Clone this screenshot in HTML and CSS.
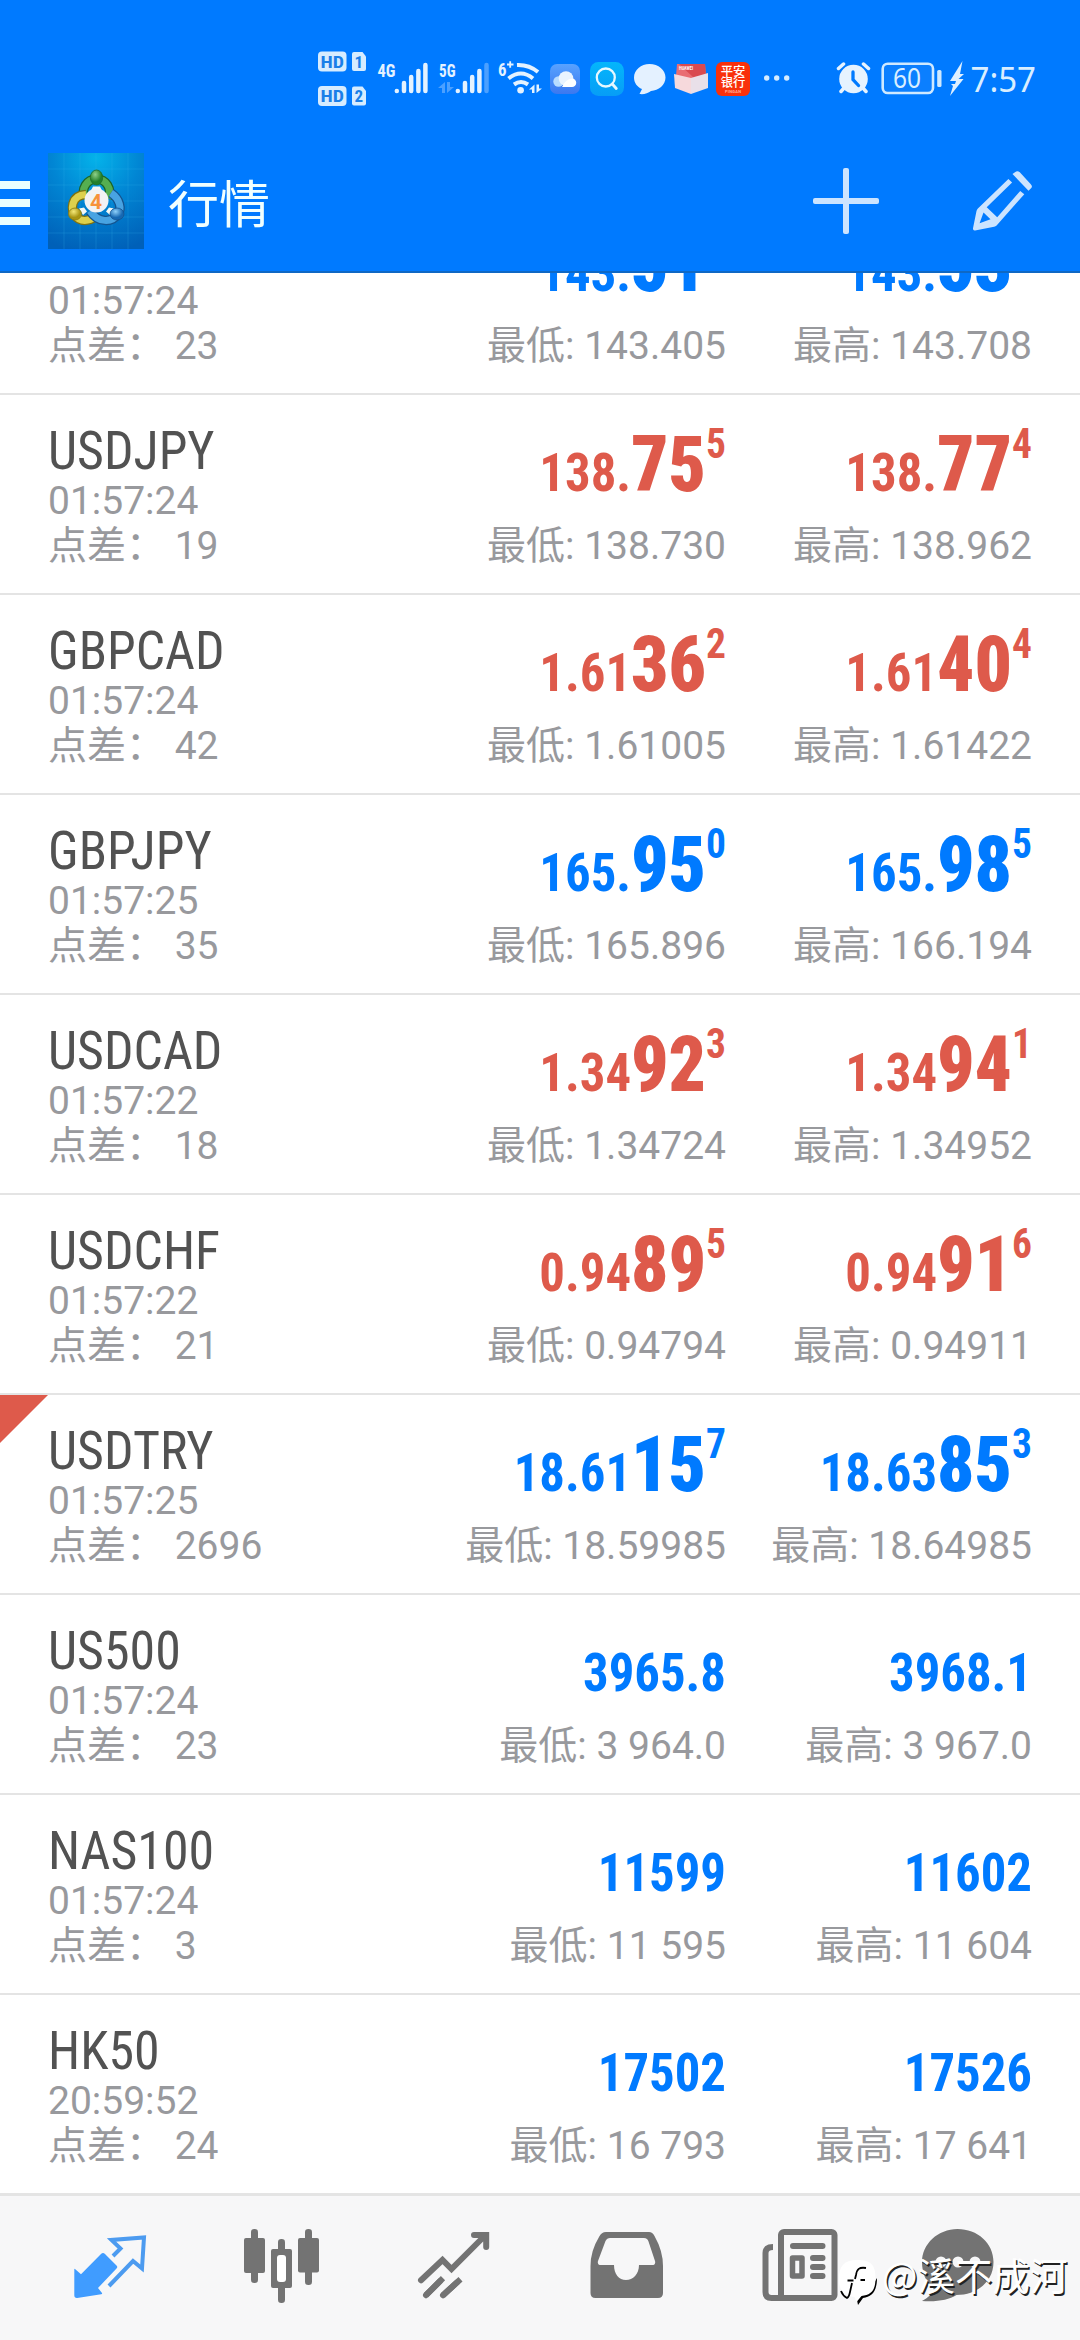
FILE: index.html
```html
<!DOCTYPE html>
<html lang="zh-CN">
<head>
<meta charset="utf-8">
<title>行情</title>
<link rel="stylesheet" href="styles.css">
</head>
<body>
<div class="screen">
  <header class="top">
    <div class="status">
      <svg class="st-hd" viewBox="316 48 54 62" width="54" height="62">
        <g fill="#d6ecff">
          <rect x="318" y="51.5" width="28.5" height="20" rx="4"/>
          <path d="M354 52h8.500l3.500 4.500v12.500a2 2 0 0 1-2 2h-10a2 2 0 0 1-2-2v-15a2 2 0 0 1 2-2z"/>
          <rect x="318" y="86" width="28.500" height="20" rx="4"/>
          <path d="M354 86.500h8.500l3.500 4.500v12.500a2 2 0 0 1-2 2h-10a2 2 0 0 1-2-2v-15a2 2 0 0 1 2-2z"/>
        </g>
        <g class="cut">
          <text x="320.500" y="67.600" textLength="23.500" lengthAdjust="spacingAndGlyphs">HD</text><text x="354.500" y="67.600">1</text>
          <text x="320.500" y="102.100" textLength="23.500" lengthAdjust="spacingAndGlyphs">HD</text><text x="354.500" y="102.100">2</text>
        </g>
      </svg>
      <svg class="st-4g" viewBox="376 58 54 38" width="54" height="38">
        <text class="net" x="377.500" y="76.500" textLength="18" lengthAdjust="spacingAndGlyphs">4G</text>
        <path class="bars" d="M396.800 91v0M404 83v8M411.200 77v14M418.400 71v20M425.400 65v26"/>
      </svg>
      <svg class="st-5g" viewBox="437 58 54 38" width="54" height="38">
        <text class="net" x="439" y="76.500" textLength="16.500" lengthAdjust="spacingAndGlyphs">5G</text>
        <path class="bars" d="M457.800 91v0M465 83v8M472.200 77v14M479.400 71v20"/>
        <path class="bars dim" d="M486.500 65v26"/>
        <path fill="#4ba0ff" d="M445 82v11h-3v-5h-4zM447 82v11l7-6h-4v-5z"/>
      </svg>
      <svg class="st-wifi" viewBox="497 58 48 38" width="48" height="38">
        <text class="net" x="498" y="75.500" textLength="8.500" lengthAdjust="spacingAndGlyphs">6</text>
        <path d="M507 64.500h6.500M510.200 61.200v6.500" stroke="#e4f2ff" stroke-width="1.800"/>
        <g fill="none" stroke="#e4f2ff" stroke-width="4">
          <path d="M517 65q12-.5 21 7"/>
          <path d="M508.500 78.500q12.500-10 24.500 0"/>
          <path d="M514 84.500q7-5 14 0"/>
        </g>
        <circle cx="520.600" cy="90.200" r="3.300" fill="#e4f2ff"/>
        <path fill="#e4f2ff" d="M534.500 84.500v8.500h-2.500v-3.500h-3zM536.500 84.500v8.500l5.500-4.500h-3v-4z"/>
      </svg>
      <svg class="st-cloud" viewBox="550 64 30 30" width="30" height="30">
        <defs><linearGradient id="cl" x2="0" y2="1"><stop stop-color="#58a2ff"/><stop offset="1" stop-color="#3b78f0"/></linearGradient></defs>
        <rect x="550" y="64" width="30" height="30" rx="7" fill="url(#cl)"/>
        <circle cx="558.500" cy="81.500" r="5.200" fill="#b9dcff"/><circle cx="566" cy="78.500" r="7.300" fill="#eaf4ff"/>
        <path fill="#fff" d="M562 87q3.500-8 10-8.500a4.200 4.200 0 0 1 0 8.500z"/>
      </svg>
      <svg class="st-search" viewBox="590 62 34 34" width="34" height="34">
        <defs><linearGradient id="se" x2="0" y2="1"><stop stop-color="#04b6fb"/><stop offset="1" stop-color="#079df6"/></linearGradient></defs>
        <rect x="590" y="62" width="34" height="34" rx="8.500" fill="url(#se)"/>
        <circle cx="605.800" cy="77.500" r="9" fill="none" stroke="#e6f8ff" stroke-width="2.300"/>
        <path d="M612.300 84l4 4.500" stroke="#e6f8ff" stroke-width="2.800" stroke-linecap="round"/>
      </svg>
      <svg class="st-chat" viewBox="633 63 33 32" width="33" height="32">
        <path fill="#e4f1ff" d="M649.500 64c9 0 16 6 16 13.500s-7 13-14.500 13.500c-3 2.500-7 3.500-11.500 3l2.500-5c-5-2-8-6.500-8-11.500 0-7.500 7-13.500 15.500-13.500z"/>
      </svg>
      <svg class="st-box" viewBox="674 63 34 32" width="34" height="32">
        <path fill="#e96d72" d="M677 64h28l1 12-15 6-15-6z"/>
        <path fill="#d94a50" d="M679 64h26l1 11-13 2z"/>
        <path fill="#f6d9dc" d="M674 74l17 4v16l-16-6z"/>
        <path fill="#e9e0e9" d="M708 73l-17 5v16l17-6z"/>
        <text x="679" y="70" font-size="4.500" fill="#fff" class="tiny" textLength="14" lengthAdjust="spacingAndGlyphs">HUAWEI</text>
      </svg>
      <svg class="st-bank" viewBox="716 62 34 34" width="34" height="34">
        <rect x="716" y="62" width="34" height="34" rx="6" fill="#f9300b"/>
        <text class="bank" x="720.700" y="76.300">平安</text><text class="bank" x="720.700" y="87.400">银行</text>
        <text class="tiny" x="725" y="92.500" font-size="4" textLength="16" fill="#ffb09c">PINGAN</text>
      </svg>
      <svg class="st-dots" viewBox="763 74 28 8" width="28" height="8"><g fill="#d6ecff"><circle cx="766.700" cy="78" r="2.700"/><circle cx="776.700" cy="78" r="2.700"/><circle cx="786.700" cy="78" r="2.700"/></g></svg>
      <svg class="st-alarm" viewBox="836 62 36 32" width="36" height="32">
        <circle cx="853.500" cy="79" r="14.300" fill="#e6f3ff"/>
        <path d="M838.500 68.500l5-4.500M868.500 68.500l-5-4.500M844 88l-3 3.500M863 88l3 3.500" stroke="#e6f3ff" stroke-width="3.500" stroke-linecap="round"/>
        <path d="M853 72v7.500l5.500 6" fill="none" stroke="#007aff" stroke-width="3.300" stroke-linecap="round"/>
      </svg>
      <svg class="st-bat" viewBox="881 56 62 42" width="62" height="42">
        <rect x="882.700" y="63.700" width="50.300" height="29.300" rx="5" fill="#0b7fff" stroke="#cfe9ff" stroke-width="2.600"/>
        <rect x="937.200" y="70" width="4.300" height="17" rx="1.500" fill="#cfe9ff"/>
        <text class="clock" x="893" y="88" font-size="27" textLength="28" lengthAdjust="spacingAndGlyphs">60</text>
      </svg>
      <svg class="st-bolt" viewBox="948 60 18 37" width="18" height="37"><path fill="#dff0ff" d="M962.500 61l-12.500 20h6l-1 3h-4l2 2-3 10 13.500-17h-5l5.500-5h-4z"/></svg>
      <svg class="st-time" viewBox="970 50 70 56" width="70" height="56"><text class="clock" x="970.500" y="92" font-size="35" textLength="65.500" lengthAdjust="spacingAndGlyphs">7:57</text></svg>
    </div>
    <div class="bar">
      <div class="burger"><i></i><i></i><i></i></div>
      <svg class="logo" viewBox="0 0 96 96" width="96" height="96">
        <defs>
          <radialGradient id="bg" cx=".5" cy=".05" r="1"><stop stop-color="#04b3ea"/><stop offset=".45" stop-color="#0186d4"/><stop offset="1" stop-color="#0060b8"/></radialGradient>
          <radialGradient id="gr" cx=".4" cy=".3"><stop stop-color="#8fd08a"/><stop offset="1" stop-color="#23802a"/></radialGradient>
          <radialGradient id="ye" cx=".4" cy=".3"><stop stop-color="#f4e878"/><stop offset="1" stop-color="#a89413"/></radialGradient>
          <radialGradient id="bl" cx=".4" cy=".3"><stop stop-color="#8ed0fa"/><stop offset="1" stop-color="#1668b2"/></radialGradient>
        </defs>
        <rect width="96" height="96" fill="url(#bg)"/>
        <path d="M0 16h96M0 32h96M0 48h96M0 64h96M0 80h96M16 0v96M32 0v96M48 0v96M64 0v96M80 0v96" stroke="#3bb4ef" stroke-opacity=".22" fill="none"/>
        <g fill="none">
          <path d="M37 45a13 13 0 1 1 23 0" stroke="#1d6527" stroke-width="9.500"/><path d="M37 45a13 13 0 1 1 23 0" stroke="#55ae50" stroke-width="7"/>
          <path d="M38 41.500c-16 1-15 16-11 21 5 7 14 6 21 1" stroke="#7f7210" stroke-width="9.500"/><path d="M38 41.500c-16 1-15 16-11 21 5 7 14 6 21 1" stroke="#ddd04c" stroke-width="7"/>
          <path d="M63 40c9 6 11 16 7 21-6 9-20 9-28-3" stroke="#14548f" stroke-width="9.500"/><path d="M63 40c9 6 11 16 7 21-6 9-20 9-28-3" stroke="#48a3e2" stroke-width="7"/>
        </g>
        <path d="M45 33.500h7l2 4H43zM31 55.500l5-1 3 4-4 3.500zM66 55.500l-5-1-3 4 4 3.500z" fill="#f4f8f4"/>
        <ellipse cx="48.500" cy="24.500" rx="6.200" ry="7.500" fill="url(#gr)" stroke="#1f6c28" stroke-width=".8"/>
        <ellipse cx="27" cy="61" rx="6.500" ry="6" fill="url(#ye)" stroke="#8a7b12" stroke-width=".8"/>
        <ellipse cx="69" cy="61" rx="7" ry="6" fill="url(#bl)" stroke="#155391" stroke-width=".8"/>
        <circle cx="48.500" cy="47.500" r="12" fill="#f2f2f4"/>
        <text x="48" y="55.500" text-anchor="middle" class="four">4</text>
      </svg>
      <h1>行情</h1>
      <svg class="plus" viewBox="813 168 66 66" width="66" height="66"><g fill="#cce4ff"><rect x="813" y="198" width="66" height="6" rx="2"/><rect x="843" y="168" width="6" height="66" rx="2"/></g></svg>
      <svg class="pencil" viewBox="972 170 62 62" width="62" height="62">
        <path fill="#cce4ff" d="M1015 172.300q2.300-2.300 4.800 0l11 12q2.300 2.500 0 4.200l-2.300 2.200-16-16.700z"/>
        <path fill="#cce4ff" fill-rule="evenodd" d="M1008.400 179l3.700 3.600-25.400 24.700 10.500 10 23-26.300 4.100 3.200-27.700 31.300q-1 1-2.500 1.300l-19 3.600q-2.400.3-2.100-2.200l3.500-17.200q.3-1.400 1.400-2.500zM983.500 212.500l-3.900 10.700 10.900-4z"/>
      </svg>
    </div>
  </header>
  <main class="list" id="list"></main>
  <nav class="tabs">
    <svg class="t1" viewBox="74 2234 73 66" width="73" height="66">
      <path fill="#409cff" d="M74.300 2269.500q0-1.200 1-.3l5.700 5 20-20.200q2-2 4 0l11.500 11.500q1.500 1.500 0 3L98 2288l4 5q.5 1-.8 1.300l-24 3.700q-2.900.2-2.900-2.700z"/>
      <path fill="none" stroke="#4c9bf0" stroke-width="4" d="M113 2256l7.500-7.500-9-8.500 32.500-2.500-2 31-9-7.500-24 25"/>
    </svg>
    <svg class="t2" viewBox="244 2228 76 76" width="76" height="76">
      <g fill="#737373"><rect x="244" y="2238" width="21" height="35" rx="2"/><rect x="251" y="2229" width="7" height="54" rx="3.300"/><rect x="298" y="2238" width="21" height="34.500" rx="2"/><rect x="305" y="2229" width="7" height="56" rx="3.300"/><rect x="271" y="2249" width="21" height="39" rx="2"/><rect x="278" y="2239" width="7" height="64" rx="3.300"/></g>
      <rect x="277" y="2255" width="9" height="27" rx="3" fill="#fff"/>
    </svg>
    <svg class="t3" viewBox="417 2231 74 68" width="74" height="68">
      <g fill="none" stroke="#737373" stroke-width="6" stroke-linecap="round"><path d="M421 2280.300l21.500-20.300 9 9 33-33M474 2235h12.200v12"/><path d="M426 2295.200l17-17M443 2295.200l17.500-16" stroke-linecap="butt"/><path d="M426 2295.200l14-14M443 2295.200l14-12.800"/></g>
    </svg>
    <svg class="t4" viewBox="590 2231 73 68" width="73" height="68">
      <path fill="#737373" fill-rule="evenodd" d="M606 2232h43q3.500 0 5.500 4 8.500 15 8.500 30v27q0 5-5 5h-62.500q-5 0-5-5v-27q0-15 8.500-29 2.500-5 7-5zM610 2238q-3 0-4.500 3l-7.500 20q-1 4 3 4h13c0 9 5 15 12 15s13-6 13-15h13q4 0 3-4l-6.500-19.500q-1-3.500-4.500-3.500z"/>
    </svg>
    <svg class="t5" viewBox="762 2228 76 74" width="76" height="74">
      <rect x="781" y="2232" width="53.500" height="66" rx="3" fill="none" stroke="#737373" stroke-width="6"/>
      <path d="M773 2247q-7.500 0-7.500 6v39q0 6 6 6H784" fill="none" stroke="#737373" stroke-width="6"/>
      <path d="M793 2246h29.500M813 2258h9.500M813 2267h9.500M813 2276h9.500" stroke="#737373" stroke-width="6" stroke-linecap="round"/>
      <rect x="792.500" y="2258" width="9.500" height="18" fill="none" stroke="#737373" stroke-width="5.500" stroke-linejoin="round"/>
    </svg>
    <svg class="t6" viewBox="921 2228 74 74" width="74" height="74">
      <path fill="#737373" d="M957.500 2229c20 0 36 14 36 33 0 20-17 33-37 33-8 5-19 7-34.500 6 6-3 10-7 12-12-8-6-12-16-12-27 0-18 16-33 35.500-33z"/>
      <g fill="#f7f7f8"><circle cx="941" cy="2262" r="5.500"/><circle cx="958" cy="2262" r="5.500"/><circle cx="975" cy="2262" r="5.500"/></g>
    </svg>
    <div class="mark">
      <svg viewBox="838 2258 40 48" width="40" height="48">
        <path fill="#000" transform="translate(1 1)" d="M876 2277c0 13-5 19-14 20l-5 7-1-5q2-4 5-5 11-1 12-12z"/>
        <path fill="#fff" d="M857 2260c14 0 18.500 5 18.500 18 0 12-4 17-14 18l-5 6-2-5c-11-1-15.500-6-15.500-18 0-13 5-19 18-19z"/>
        <path fill="none" stroke="#000" stroke-width="1.800" d="M866 2268c-7-1-9 1-10 7l-1 4M847.500 2280.500h6M860.500 2280h4.500M852 2283l-2 9q-1 5-3 6-4-2-6-7"/>
      </svg>
      <span>@溪不成河</span>
    </div>
  </nav>
</div>
<script src="quotes.js"></script>
</body>
</html>
```
FILE: styles.css
```css
* { box-sizing: border-box; }
body { margin: 0; background: #fff; font-family: Roboto, "Noto Sans CJK SC", sans-serif; }
.screen { width: 1080px; height: 2340px; display: flex; flex-direction: column; overflow: hidden; }
svg { display: block; flex: none; }
.top { height: 273px; flex: none; background: #007aff; border-bottom: 2px solid #0f68c4; z-index: 1; }

.status { height: 130px; padding: 48px 0 0 316px; display: flex; align-items: flex-start; }
.cut { font: 700 17px "Roboto Condensed", Roboto, sans-serif; fill: #1a7fe8; }
.net { font: 700 18px "Roboto Condensed", Roboto, sans-serif; fill: #e4f2ff; }
.bars { fill: none; stroke: #e4f2ff; stroke-width: 4.500; stroke-linecap: round; }
.dim { stroke: #4ba0ff; }
.tiny { font-family: Roboto, sans-serif; font-weight: 700; }
.bank { font: 500 12.300px "Noto Sans CJK SC", sans-serif; fill: #fff; }
.clock { font-family: "Noto Sans", sans-serif; fill: #d9eeff; }
.st-4g { margin: 10px 0 0 6px; }
.st-5g { margin: 10px 0 0 7px; }
.st-wifi { margin: 10px 0 0 6px; }
.st-cloud { margin: 16px 0 0 5px; }
.st-search { margin: 14px 0 0 10px; }
.st-chat { margin: 15px 0 0 9px; }
.st-box { margin: 15px 0 0 8px; }
.st-bank { margin: 14px 0 0 8px; }
.st-dots { margin: 26px 0 0 13px; }
.st-alarm { margin: 14px 0 0 45px; }
.st-bat { margin: 8px 0 0 9px; }
.st-bolt { margin: 12px 0 0 5px; }
.st-time { margin: 2px 0 0 4px; }

.bar { height: 141px; display: flex; align-items: flex-start; }
.burger { width: 30px; margin: 51px 18px 0 0; display: flex; flex-direction: column; gap: 10px; }
.burger i { height: 8px; background: #eaffff; }
.logo { margin-top: 23px; }
.four { font: 700 21px Roboto, sans-serif; fill: #f7923a; }
h1 { margin: 34px 0 0 24px; width: 645px; flex: none; font: 400 51px/74px "Noto Sans CJK SC", sans-serif; color: #f0ffff; }
.plus { margin: 38px 93px 0 0; }
.pencil { margin-top: 40px; }

.list { height: 2000px; flex: none; margin-top: -78px; }
.row { position: relative; height: 200px; padding: 0 48px; border-bottom: 2px solid #e4e4e4; display: grid; grid-template-columns: 372px 306px 306px; color: #98999d; font-size: 39px; }
.name p, .quote p { margin: 0; height: 45px; line-height: 46px; white-space: pre; }
.name { padding-top: 24px; }
.sym { height: 59px; font: 400 54px/63px "Roboto Condensed", Roboto, sans-serif; color: #525252; transform: scaleX(.96); transform-origin: left; }
.quote { text-align: right; padding-top: 46px; }
.price { height: 82px; font: 700 54px/63px "Roboto Condensed", Roboto, sans-serif; color: #007aff; white-space: nowrap; transform: scaleX(.94); transform-origin: right; }
.down .price { color: #de5a4b; }
.price b { font-size: 78px; line-height: 0; }
.price sup { font-size: 42px; line-height: 0; vertical-align: 33px; }
.flag::before { content: ""; position: absolute; left: 0; top: 0; width: 48px; height: 48px; background: #de5a4b; clip-path: polygon(0 0, 100% 0, 0 100%); }

.tabs { position: relative; height: 147px; margin-top: -2px; flex: none; background: #f7f7f8; border-top: 3px solid #e4e4e4; display: flex; align-items: flex-start; z-index: 1; }
.t1 { margin: 38px 0 0 74px; }
.t2 { margin: 32px 0 0 97px; }
.t3 { margin: 35px 0 0 97px; }
.t4 { margin: 35px 0 0 99px; }
.t5 { margin: 32px 0 0 99px; }
.t6 { margin: 32px 0 0 83px; }
.mark { position: absolute; left: 838px; top: 62px; display: flex; color: #fff; font: 400 37.500px/50px "Noto Sans CJK SC", sans-serif; text-shadow: 1.500px 1.500px 0 #222; white-space: nowrap; }
.mark span { margin: -9px 0 0 4px; }
```
FILE: quotes.js
```js
// symbol, time, spread, bid [small, big, sup], ask, low, high, direction, flag
const quotes = [
  ["", "01:57:24", "23", ["143.", "51", "4"], ["143.", "53", "7"], "143.405", "143.708", "up"],
  ["USDJPY", "01:57:24", "19", ["138.", "75", "5"], ["138.", "77", "4"], "138.730", "138.962", "down"],
  ["GBPCAD", "01:57:24", "42", ["1.61", "36", "2"], ["1.61", "40", "4"], "1.61005", "1.61422", "down"],
  ["GBPJPY", "01:57:25", "35", ["165.", "95", "0"], ["165.", "98", "5"], "165.896", "166.194", "up"],
  ["USDCAD", "01:57:22", "18", ["1.34", "92", "3"], ["1.34", "94", "1"], "1.34724", "1.34952", "down"],
  ["USDCHF", "01:57:22", "21", ["0.94", "89", "5"], ["0.94", "91", "6"], "0.94794", "0.94911", "down"],
  ["USDTRY", "01:57:25", "2696", ["18.61", "15", "7"], ["18.63", "85", "3"], "18.59985", "18.64985", "up", "flag"],
  ["US500", "01:57:24", "23", ["3965.8"], ["3968.1"], "3 964.0", "3 967.0", "up"],
  ["NAS100", "01:57:24", "3", ["11599"], ["11602"], "11 595", "11 604", "up"],
  ["HK50", "20:59:52", "24", ["17502"], ["17526"], "16 793", "17 641", "up"]
];
const price = ([s, b, p]) => `<div class="price">${s}${b ? `<b>${b}</b><sup>${p}</sup>` : ""}</div>`;
document.getElementById("list").innerHTML = quotes.map(([sym, time, spread, bid, ask, low, high, dir, flag]) => `
  <section class="row ${dir} ${flag || ""}">
    <div class="name"><div class="sym">${sym}</div><p>${time}</p><p>点差： ${spread}</p></div>
    <div class="quote">${price(bid)}<p>最低: ${low}</p></div>
    <div class="quote">${price(ask)}<p>最高: ${high}</p></div>
  </section>`).join("");
```
